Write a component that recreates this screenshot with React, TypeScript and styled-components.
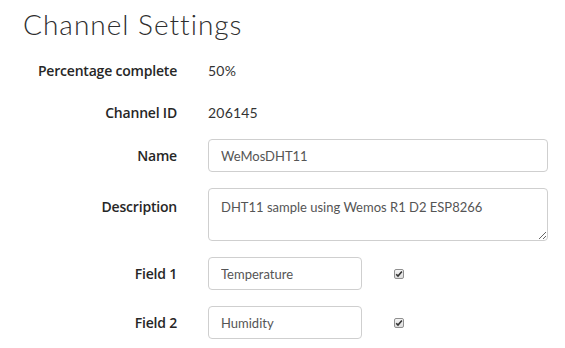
import styled, { createGlobalStyle } from 'styled-components';

const GlobalStyle = createGlobalStyle`
  body {
    margin: 0;
    background: #fff;
    font-family: Lato, "Liberation Sans", sans-serif;
    color: #333;
  }
`

const Page = styled.div`
  width: 565px;
  height: 348px;
  overflow: hidden;
`

const Title = styled.h1`
  margin: 7px 0 14px 23px;
  font-family: Lato, "Open Sans", sans-serif;
  font-weight: 300;
  font-size: 28px;
  line-height: 34px;
  color: #2e2e2e;
  letter-spacing: 1px;
`

const Row = styled.div<{ $height: number; $gap: number }>`
  display: grid;
  grid-template-columns: 177px 1fr;
  column-gap: 31px;
  align-items: center;
  min-height: ${p => p.$height}px;
  margin-bottom: ${p => p.$gap}px;
`

const Label = styled.div<{ $top?: boolean }>`
  text-align: right;
  font-family: "Open Sans", Lato, sans-serif;
  font-weight: 600;
  font-size: 14px;
  letter-spacing: -0.2px;
  color: #262626;
  align-self: ${p => (p.$top ? 'start' : 'center')};
  padding-top: ${p => (p.$top ? '9px' : '0')};
`

const Value = styled.div`
  font-size: 14px;
  letter-spacing: 0.2px;
  color: #333;
`

const inputBase = `
  box-sizing: border-box;
  border: 1px solid #cfcfcf;
  border-radius: 4px;
  font-family: Lato, "Liberation Sans", sans-serif;
  font-size: 13px;
  color: #555;
  background: #fff;
  outline: none;
  padding: 0 12px;
`

const TextInput = styled.input<{ $width: number }>`
  ${inputBase}
  width: ${p => p.$width}px;
  height: 33px;
  display: block;
`

const TextArea = styled.textarea`
  ${inputBase}
  display: block;
  width: 340px;
  height: 53px;
  padding-top: 9px;
  resize: vertical;
  line-height: 18px;
`

const FieldLine = styled.div`
  display: flex;
  align-items: center;
  gap: 32px;
`

const Check = styled.span`
  display: inline-flex;
  align-items: center;
  justify-content: center;
  box-sizing: border-box;
  width: 10px;
  height: 10px;
  border: 1px solid #8f8f8f;
  border-radius: 2px;
  background: linear-gradient(#f4f4f4, #dcdcdc);
`

const CheckMark = () => (
  <Check>
    <svg width="8" height="8" viewBox="0 0 8 8">
      <path d="M1.2 4.2 L3 6.1 L6.9 1.6" fill="none" stroke="#333" strokeWidth="1.6" />
    </svg>
  </Check>
)

const fields = ['Temperature', 'Humidity']

const App = () => {
  return (
    <Page>
      <GlobalStyle />
      <Title>Channel Settings</Title>
      <Row $height={30} $gap={12}>
        <Label>Percentage complete</Label>
        <Value>50%</Value>
      </Row>
      <Row $height={30} $gap={12}>
        <Label>Channel ID</Label>
        <Value>206145</Value>
      </Row>
      <Row $height={33} $gap={16}>
        <Label>Name</Label>
        <div>
          <TextInput $width={340} defaultValue="WeMosDHT11" readOnly />
        </div>
      </Row>
      <Row $height={53} $gap={16}>
        <Label $top>Description</Label>
        <TextArea defaultValue="DHT11 sample using Wemos R1 D2 ESP8266" readOnly />
      </Row>
      {fields.map((f, idx) => (
        <Row key={f} $height={33} $gap={16}>
          <Label>Field {idx + 1}</Label>
          <FieldLine>
            <TextInput $width={154} defaultValue={f} readOnly />
            <CheckMark />
          </FieldLine>
        </Row>
      ))}
    </Page>
  );
};

export default App;
